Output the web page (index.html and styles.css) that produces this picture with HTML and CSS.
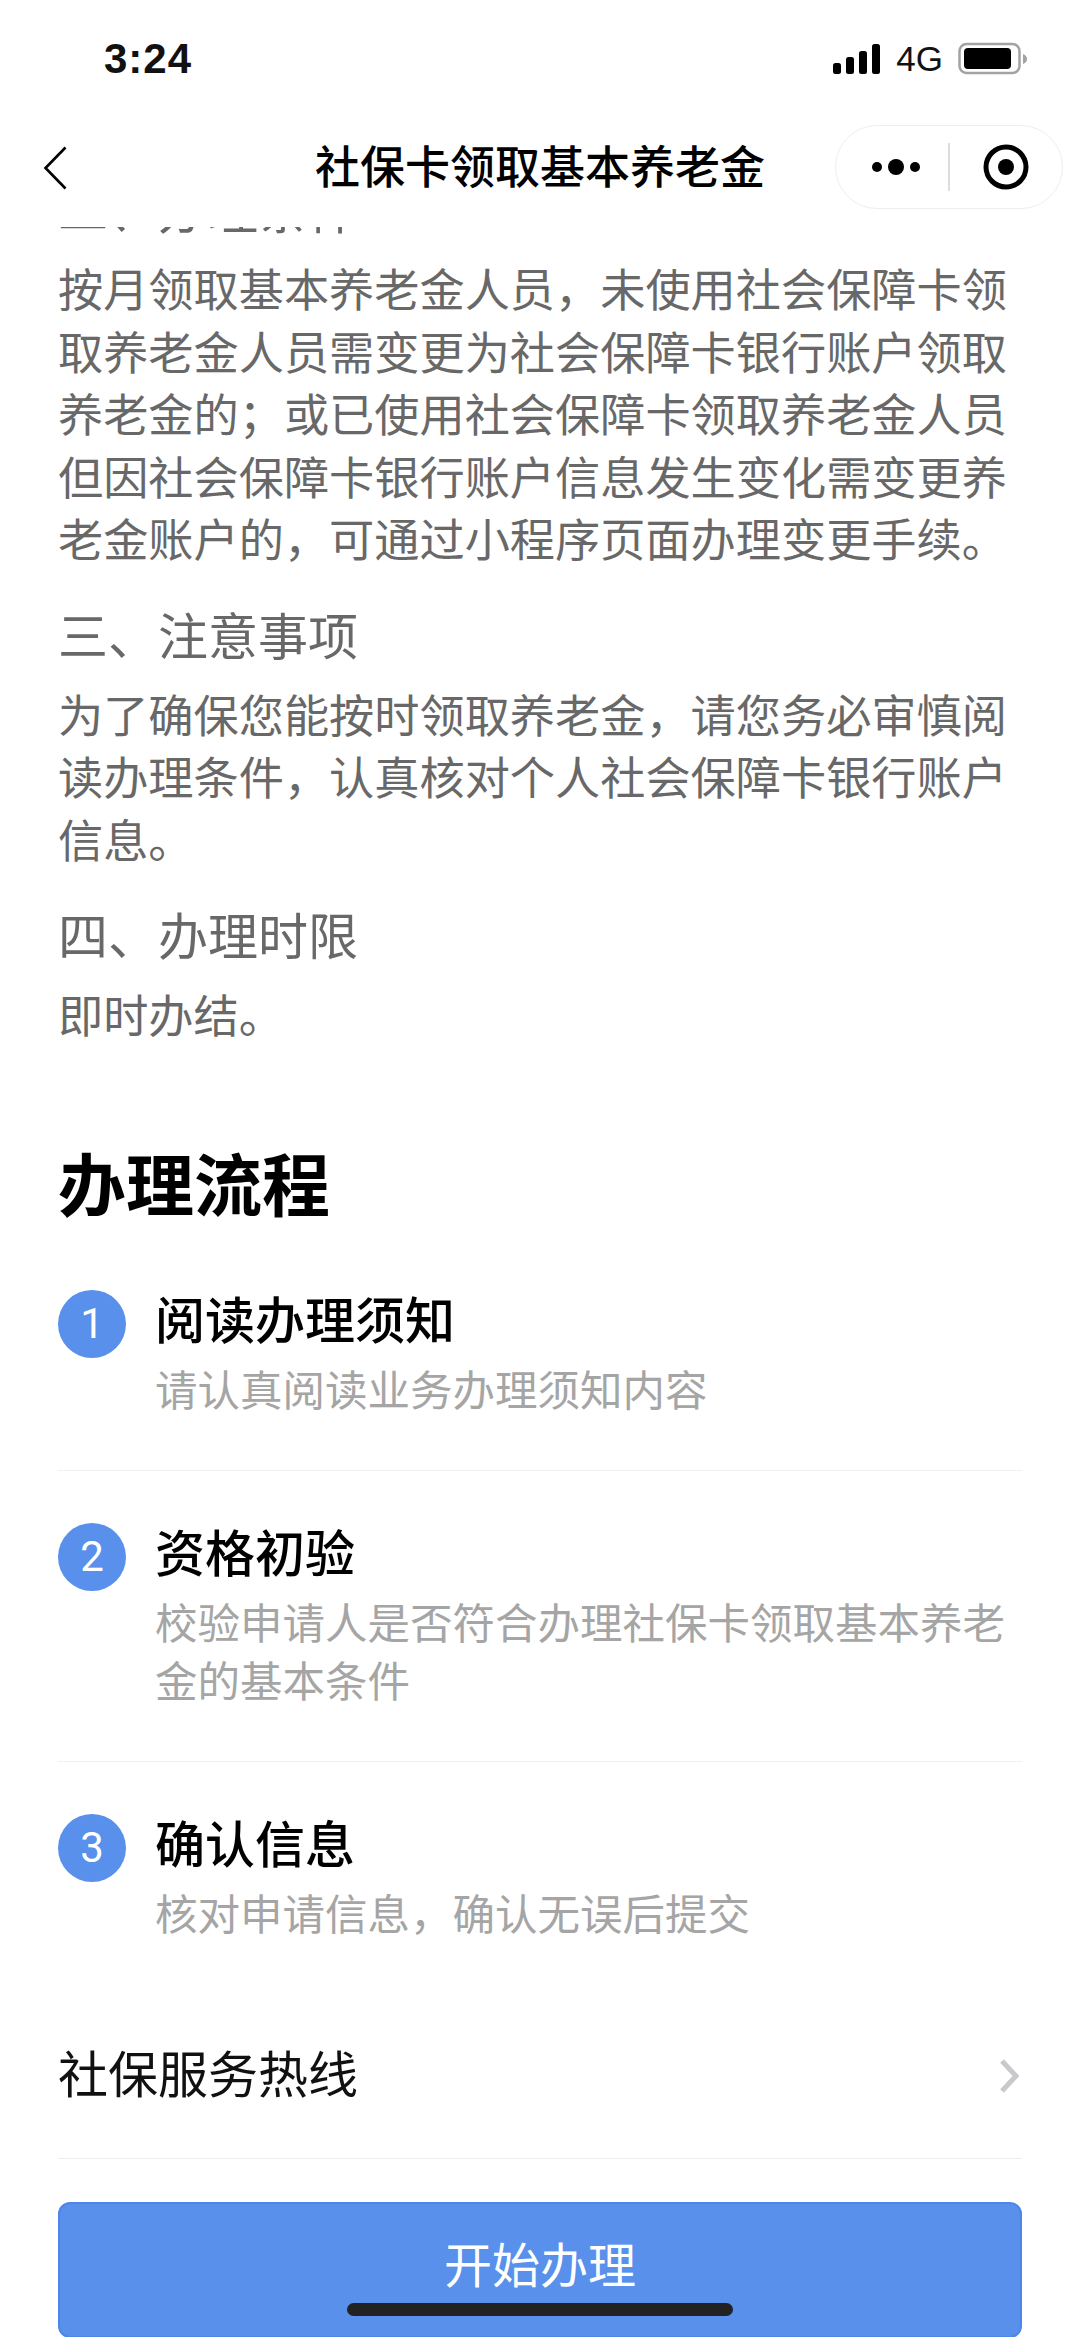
FILE: index.html
```html
<!DOCTYPE html>
<html lang="zh-CN">
<head>
<meta charset="utf-8">
<title>社保卡领取基本养老金</title>
<link rel="stylesheet" href="styles.css">
</head>
<body>
<div class="phone">
  <header class="top">
    <div class="status">
      <span class="time">3:24</span>
      <div class="status-right">
        <svg class="signal" width="48" height="32" viewBox="0 0 48 32"><rect x="0" y="20" width="8" height="11" rx="2.5"/><rect x="13" y="14" width="8" height="17" rx="2.5"/><rect x="26" y="8" width="8" height="23" rx="2.5"/><rect x="39" y="1" width="8" height="30" rx="2.5"/></svg>
        <span class="net">4G</span>
        <svg class="battery" width="70" height="34" viewBox="0 0 70 34"><rect x="1.5" y="2" width="60" height="29" rx="7" fill="none" stroke="#a3a3a3" stroke-width="2.5"/><rect x="6" y="6" width="47" height="21" rx="4" fill="#000"/><path d="M65 12c3 1 4 3 4 5s-1 4-4 5z" fill="#a3a3a3"/></svg>
      </div>
    </div>
    <nav class="nav">
      <svg class="back" width="24" height="44" viewBox="0 0 24 44"><path d="M22.5 1.5 2.5 22l20 20.5" fill="none" stroke="#000" stroke-width="2.6"/></svg>
      <h1 class="nav-title">社保卡领取基本养老金</h1>
      <div class="capsule">
        <svg class="more" width="50" height="20" viewBox="0 0 50 20"><circle cx="6" cy="10" r="5"/><circle cx="25" cy="10" r="8"/><circle cx="44" cy="10" r="5"/></svg>
        <span class="cap-line"></span>
        <svg class="target" width="46" height="46" viewBox="0 0 46 46"><circle cx="23" cy="23" r="20" fill="none" stroke="#000" stroke-width="5"/><circle cx="23" cy="23" r="8"/></svg>
      </div>
    </nav>
  </header>
  <main class="scroll">
    <div class="scroll-inner">
      <h3 class="sec">二、办理条件</h3>
      <p class="para">按月领取基本养老金人员，未使用社会保障卡领取养老金人员需变更为社会保障卡银行账户领取养老金的；或已使用社会保障卡领取养老金人员但因社会保障卡银行账户信息发生变化需变更养老金账户的，可通过小程序页面办理变更手续。</p>
      <h3 class="sec">三、注意事项</h3>
      <p class="para">为了确保您能按时领取养老金，请您务必审慎阅读办理条件，认真核对个人社会保障卡银行账户信息。</p>
      <h3 class="sec">四、办理时限</h3>
      <p class="para">即时办结。</p>
      <h2 class="flow-title">办理流程</h2>
      <ul class="steps">
        <li class="step">
          <span class="num">1</span>
          <div class="step-body"><div class="step-title">阅读办理须知</div><div class="step-desc">请认真阅读业务办理须知内容</div></div>
        </li>
        <li class="step">
          <span class="num">2</span>
          <div class="step-body"><div class="step-title">资格初验</div><div class="step-desc">校验申请人是否符合办理社保卡领取基本养老金的基本条件</div></div>
        </li>
        <li class="step">
          <span class="num">3</span>
          <div class="step-body"><div class="step-title">确认信息</div><div class="step-desc">核对申请信息，确认无误后提交</div></div>
        </li>
      </ul>
      <div class="hotline">
        <span class="hotline-text">社保服务热线</span>
        <svg width="20" height="34" viewBox="0 0 20 34"><path d="M3 2l14 15L3 32" fill="none" stroke="#c8c9cc" stroke-width="5"/></svg>
      </div>
      <button class="start">开始办理</button>
    </div>
  </main>
  <div class="home-bar"></div>
</div>
</body>
</html>
```
FILE: styles.css
```css
* { box-sizing: border-box; }
html, body { margin: 0; padding: 0; background: #fff; }
body { font-family: "Liberation Sans", "Noto Sans CJK SC", sans-serif; }
.phone { position: relative; width: 1080px; height: 2337px; overflow: hidden; display: flex; flex-direction: column; background: #fff; }
.top { height: 227px; flex: none; background: #fff; }
.status { height: 120px; padding: 34px 52px 0 104px; display: flex; justify-content: space-between; align-items: flex-start; }
.time { font-size: 42px; line-height: 50px; font-weight: 700; color: #111; letter-spacing: 1px; }
.status-right { display: flex; align-items: center; gap: 15px; margin-top: 8px; }
.net { font-size: 35px; line-height: 34px; color: #111; }
.nav { height: 88px; margin-top: 5px; position: relative; display: flex; align-items: center; justify-content: center; }
.back { position: absolute; left: 43px; top: 21px; }
.nav-title { margin: 0; font-size: 45px; line-height: 60px; font-weight: 500; color: #000; }
.capsule { position: absolute; left: 835px; top: 0; width: 228px; height: 84px; border: 1.5px solid #eee; border-radius: 42px; display: flex; align-items: center; background: #fff; }
.more { margin-left: 35px; }
.cap-line { width: 1.5px; height: 48px; background: #ddd; margin-left: 27px; }
.target { margin-left: 33px; }
.scroll { flex: 1; overflow: hidden; }
.scroll-inner { margin-top: -50px; padding: 0 58px; }
.sec { margin: 0 0 14px; font-size: 50px; line-height: 70px; font-weight: 400; color: #686868; }
.para { margin: 0 0 29px; font-size: 45.2px; line-height: 62.5px; color: #686868; }
.flow-title { margin: 89px 0 0; font-size: 68px; line-height: 96px; font-weight: 700; color: #000; }
.steps { list-style: none; margin: 53px 0 0; padding: 0; }
.step { display: flex; gap: 29px; padding-bottom: 49px; border-bottom: 1.5px solid #f0f0f0; margin-bottom: 50px; }
.step:last-child { border-bottom: none; margin-bottom: 0; padding-bottom: 50px; }
.num { width: 68px; height: 68px; flex: none; border-radius: 50%; background: #5890eb; color: #fff; font-family: Roboto, sans-serif; font-weight: 400; font-size: 42px; line-height: 68px; text-align: center; margin-top: 2px; }
.step-body { flex: 1; }
.step-title { font-size: 50px; line-height: 68px; font-weight: 500; color: #000; }
.step-desc { margin-top: 7px; font-size: 42.5px; line-height: 58px; color: #a5a5a5; }
.hotline { display: flex; justify-content: space-between; align-items: center; height: 164px; border-bottom: 1.5px solid #eee; padding-right: 3px; font-size: 50px; color: #111; }
.hotline-text { line-height: 60px; }
.start { display: block; width: 100%; height: 136px; margin-top: 43px; padding: 0 0 6px; border: 2px solid #4d86ea; border-radius: 12px; background: #5890eb; color: #fff; font: inherit; font-size: 48px; line-height: 60px; }
.home-bar { position: absolute; left: 347px; bottom: 21px; width: 386px; height: 13px; border-radius: 7px; background: #222; }
```
